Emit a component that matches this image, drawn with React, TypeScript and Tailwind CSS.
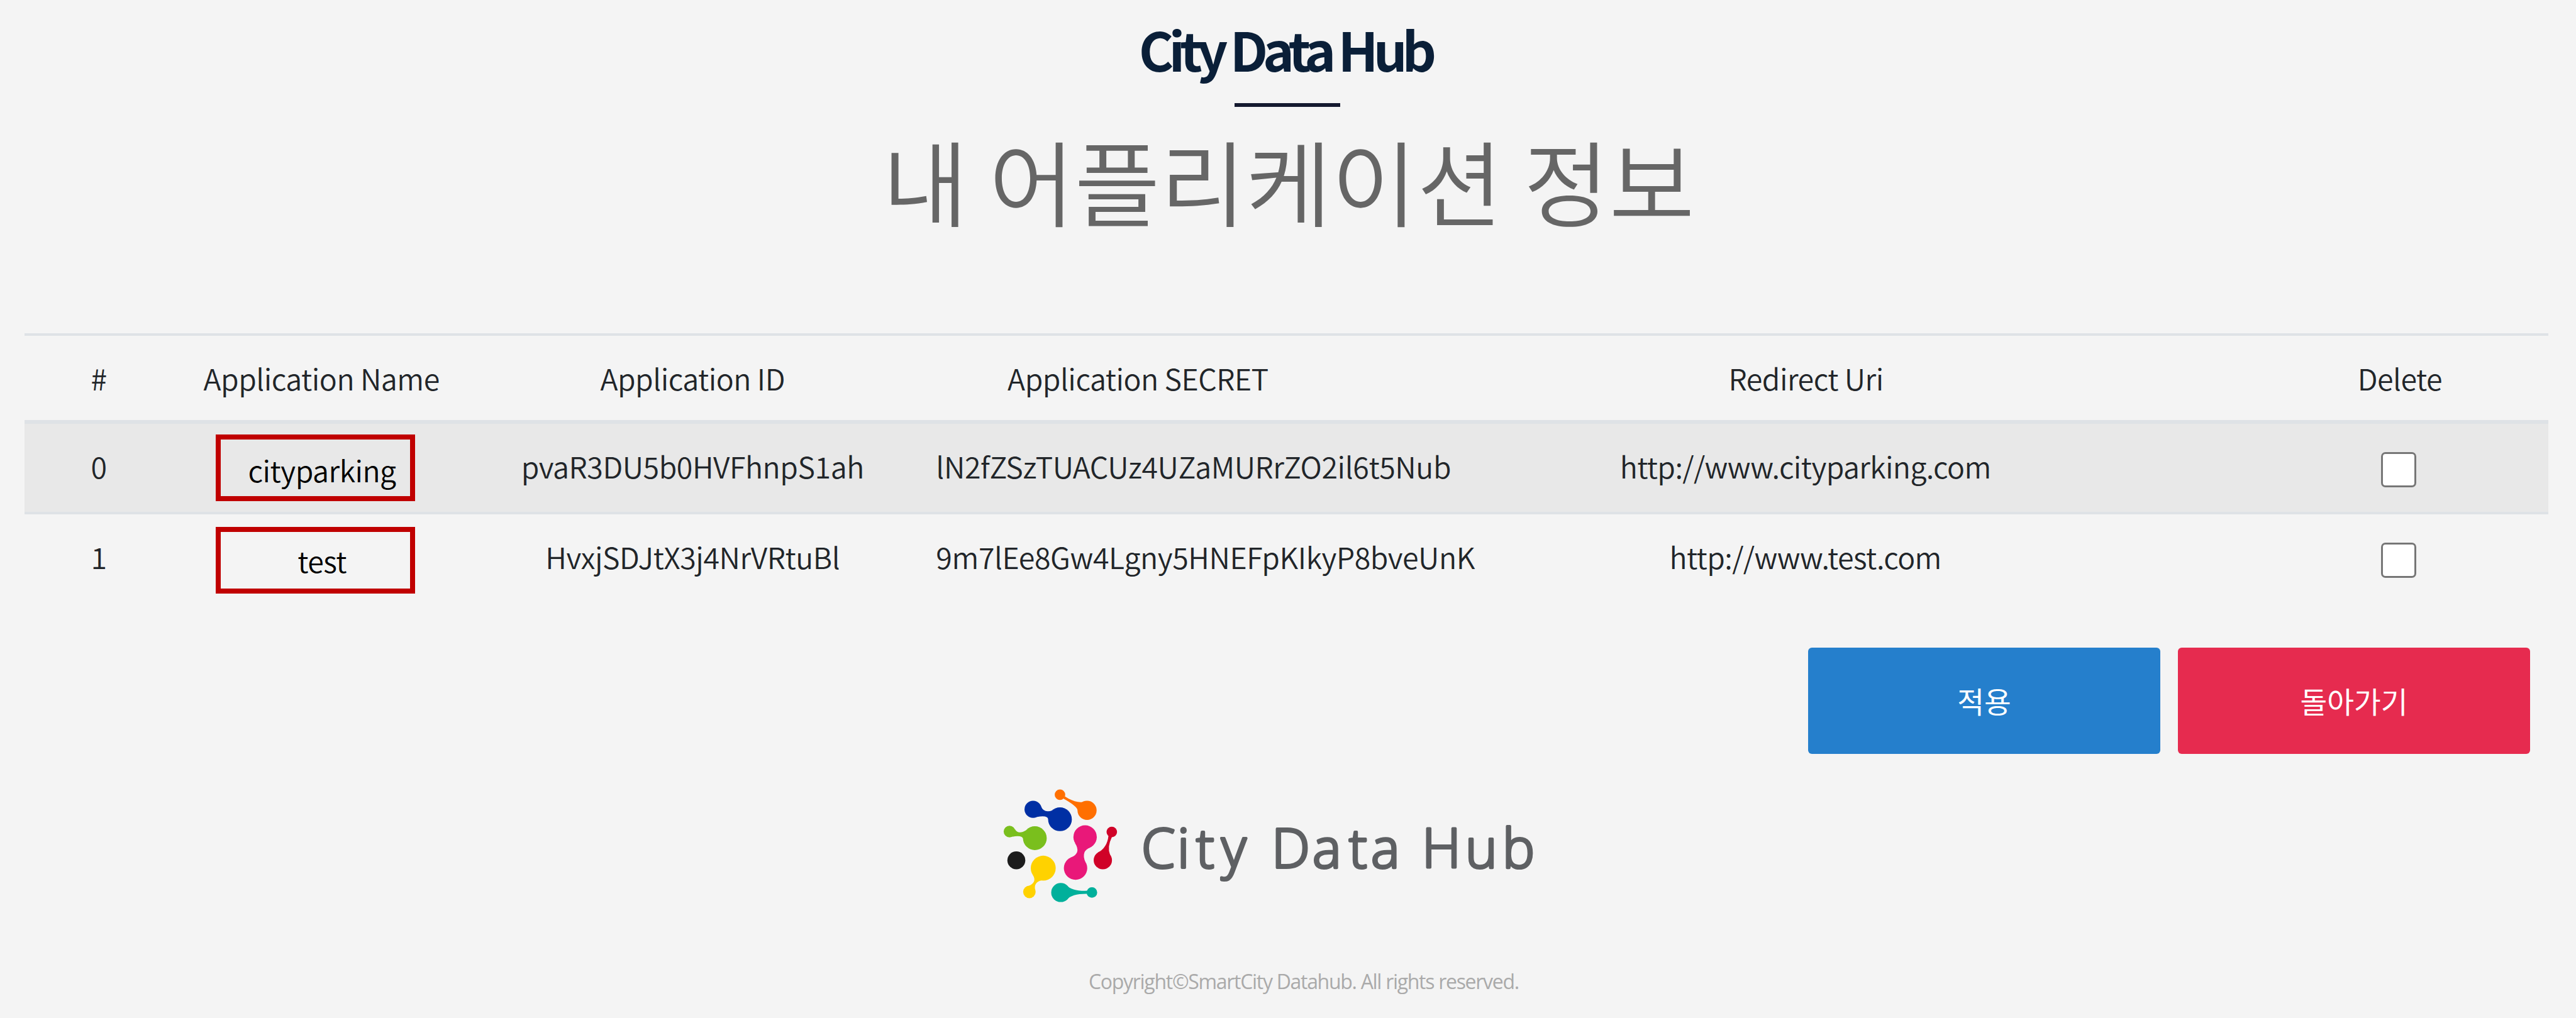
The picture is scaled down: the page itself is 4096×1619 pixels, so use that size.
const rows = [
  { no: '0', name: 'cityparking', id: 'pvaR3DU5b0HVFhnpS1ah', secret: 'lN2fZSzTUACUz4UZaMURrZO2il6t5Nub', uri: 'http://www.cityparking.com' },
  { no: '1', name: 'test', id: 'HvxjSDJtX3j4NrVRtuBl', secret: '9m7lEe8Gw4Lgny5HNEFpKIkyP8bveUnK', uri: 'http://www.test.com' },
];

function Header() {
  return (
    <header className="flex h-[530px] flex-col items-center pt-[27px]">
      <h1 className="mr-[9px] h-[100px] text-[84.7px] leading-[100px] font-bold tracking-[-8px] whitespace-nowrap text-[#0a1f38]">
        City Data Hub
      </h1>
      <div className="mt-[37px] mr-[3px] h-[6px] w-[168px] bg-[#14192f]" />
      <h2 className="mt-[15px] ml-[2px] text-[148px] leading-[200px] font-[350] whitespace-nowrap text-[#666666]">내 어플리케이션 정보</h2>
    </header>
  );
}

function AppTable() {
  return (
    <section className="ml-[39px] w-[4013px] text-[46.55px] leading-[60px] font-[350] tracking-[-0.5px] text-[#212529]">
      <div className="grid h-[144px] grid-cols-[repeat(17,minmax(0,1fr))] border-t-4 border-b-6 border-[#dee2e6] pt-[37px] text-center whitespace-nowrap">
        <span>#</span>
        <span className="col-span-2">Application Name</span>
        <span className="col-span-3">Application ID</span>
        <span className="col-span-3">Application SECRET</span>
        <span className="col-span-6">Redirect Uri</span>
        <span className="col-span-2">Delete</span>
      </div>
      {rows.map((r, i) => (
        <div
          key={r.no}
          className={
            'grid h-[144px] grid-cols-[repeat(17,minmax(0,1fr))] text-center whitespace-nowrap ' +
            (i === 0 ? 'border-b-4 border-[#dee2e6] bg-[#e8e8e8]' : '')
          }
        >
          <span className="pt-[37px]">{r.no}</span>
          <span className={'col-span-2 pl-[68px] ' + (i === 0 ? 'pt-[17px]' : 'pt-[20px]')}>
            <span
              className={
                'block h-[106px] w-[317px] border-8 border-[#c00000] pl-[21px] text-black ' +
                (i === 0 ? 'pt-[18px]' : 'pt-[15px]')
              }
            >
              {r.name}
            </span>
          </span>
          <span className="col-span-3 pt-[37px] tracking-[-0.45px]">{r.id}</span>
          <span className="col-span-3 pt-[37px] pl-[33px] text-left tracking-[-0.42px]">{r.secret}</span>
          <span className="col-span-6 pt-[37px] pr-[2px] tracking-[-0.6px]">{r.uri}</span>
          <span className="col-span-2 flex items-start justify-center pt-[45px] pr-[4px]">
            <input type="checkbox" className="m-0 h-[56px] w-[56px] appearance-none rounded-[7px] border-3 border-[#767676] bg-white" />
          </span>
        </div>
      ))}
    </section>
  );
}

function Mark() {
  return (
    <svg viewBox="0 0 720 690" className="h-[214px] w-[223px] shrink-0">
      <g fill="#ff6f00">
        <circle cx="363" cy="80" r="27" />
        <circle cx="502" cy="160" r="49" />
        <path d="M388 88 Q440 123 480 117 L454 160 Q448 137 380 100Z" />
      </g>
      <g fill="#002fa4">
        <circle cx="225" cy="155" r="44" />
        <circle cx="363" cy="206" r="61" />
        <path d="M266 140 Q280 176 325 160 L303 206 Q300 184 245 194Z" />
      </g>
      <g fill="#7abf1d">
        <circle cx="104" cy="269" r="30" />
        <circle cx="234" cy="303" r="61" />
        <path d="M132 257 Q148 287 190 262 L176 310 Q170 285 118 296Z" />
      </g>
      <g fill="#e91879">
        <circle cx="492" cy="297" r="60" />
        <circle cx="443" cy="457" r="60" />
        <path d="M440 328 Q473 380 420 402 L493 425 Q470 370 518 351Z" />
      </g>
      <g fill="#d00228">
        <circle cx="629" cy="271" r="27" />
        <circle cx="583" cy="416" r="47" />
        <path d="M612 290 Q606 352 556 378 L620 388 Q604 350 630 296Z" />
      </g>
      <circle cx="139" cy="417" r="46" fill="#1c1c1c" />
      <g fill="#ffd200">
        <circle cx="277" cy="457" r="64" />
        <circle cx="206" cy="579" r="32" />
        <path d="M224 492 Q247 530 200 550 L236 570 Q226 530 268 519Z" />
      </g>
      <g fill="#00b09b">
        <circle cx="367" cy="582" r="49" />
        <circle cx="527" cy="582" r="27" />
        <path d="M397 545 Q425 577 508 573 L508 589 Q425 587 397 619Z" />
      </g>
    </svg>
  );
}

function Footer() {
  return (
    <footer>
      <div className="mt-[40px] ml-[1573px] flex">
        <Mark />
        <svg viewBox="0 0 660 214" className="h-[214px] w-[660px] overflow-visible">
          <text
            y="141"
            x="19 76 106 146 226 291 349 384 465 534 593"
            fontFamily="Open Sans"
            fontSize="86"
            fontWeight="300"
            fill="#5e6063"
            stroke="#5e6063"
            strokeWidth="4.2"
            strokeLinejoin="round"
          >
            CityDataHub
          </text>
        </svg>
      </div>
      <p className="mt-[83px] ml-[1731px] font-['Open_Sans'] text-[32px] leading-[50px] tracking-[-1.3px] whitespace-nowrap text-[#aaaaaa]">
        Copyright©SmartCity Datahub. All rights reserved.
      </p>
    </footer>
  );
}

export default function App() {
  return (
    <div className="h-[1619px] w-[4096px] overflow-hidden bg-[#f4f4f4] font-['Noto_Sans_CJK_KR',sans-serif]">
      <Header />
      <AppTable />
      <div className="mt-[68px] ml-[2875px] flex gap-[28px] text-[46.5px] leading-[60px] text-white">
        <button className="h-[169px] w-[560px] rounded-[6px] bg-[#257fcc] pb-[2px]">적용</button>
        <button className="h-[169px] w-[560px] rounded-[6px] bg-[#e62b4f] pb-[2px]">돌아가기</button>
      </div>
      <Footer />
    </div>
  );
}
